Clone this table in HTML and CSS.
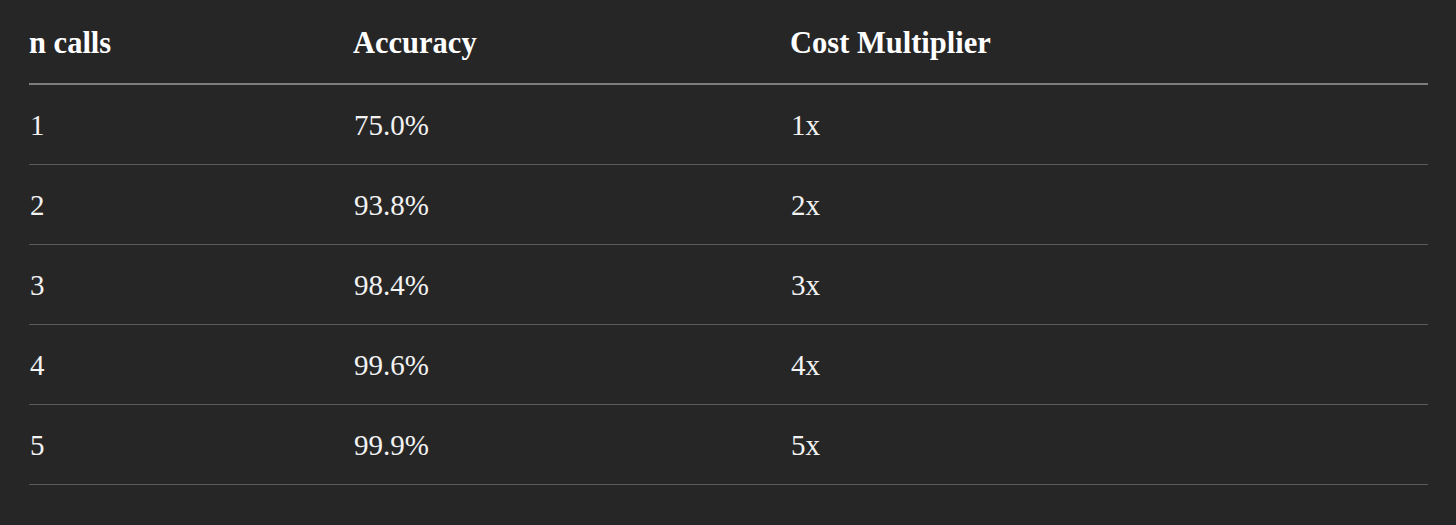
FILE: index.html
```html
<!DOCTYPE html>
<html lang="en">
<head>
<meta charset="utf-8">
<title>n calls table</title>
<link rel="stylesheet" href="styles.css">
</head>
<body>
<div class="page">
  <div class="table">
    <div class="row head">
      <div class="cell">n calls</div>
      <div class="cell">Accuracy</div>
      <div class="cell">Cost Multiplier</div>
    </div>
    <div class="row">
      <div class="cell">1</div>
      <div class="cell">75.0%</div>
      <div class="cell">1x</div>
    </div>
    <div class="row">
      <div class="cell">2</div>
      <div class="cell">93.8%</div>
      <div class="cell">2x</div>
    </div>
    <div class="row">
      <div class="cell">3</div>
      <div class="cell">98.4%</div>
      <div class="cell">3x</div>
    </div>
    <div class="row">
      <div class="cell">4</div>
      <div class="cell">99.6%</div>
      <div class="cell">4x</div>
    </div>
    <div class="row">
      <div class="cell">5</div>
      <div class="cell">99.9%</div>
      <div class="cell">5x</div>
    </div>
  </div>
</div>
</body>
</html>
```

FILE: styles.css
```css
html, body {
  margin: 0;
  padding: 0;
  background: #262626;
}

.page {
  padding: 0 28px 0 29px;
  font-family: "Liberation Serif", "Times New Roman", serif;
  color: #f2f2f2;
}

.table {
  display: flex;
  flex-direction: column;
}

.row {
  display: grid;
  grid-template-columns: 324px 437px 1fr;
  align-items: center;
  box-sizing: border-box;
  height: 80px;
  padding-top: 1px;
  border-bottom: 1px solid #5a5a5a;
  font-size: 29px;
}

.row.head {
  align-items: end;
  height: 85px;
  padding-top: 0;
  padding-bottom: 25px;
  border-bottom: 2px solid #7e7e7e;
  font-weight: bold;
  font-size: 30.5px;
  color: #ffffff;
}

.cell {
  padding-left: 1px;
  line-height: 1;
}

.head .cell {
  padding-left: 0;
}
```
